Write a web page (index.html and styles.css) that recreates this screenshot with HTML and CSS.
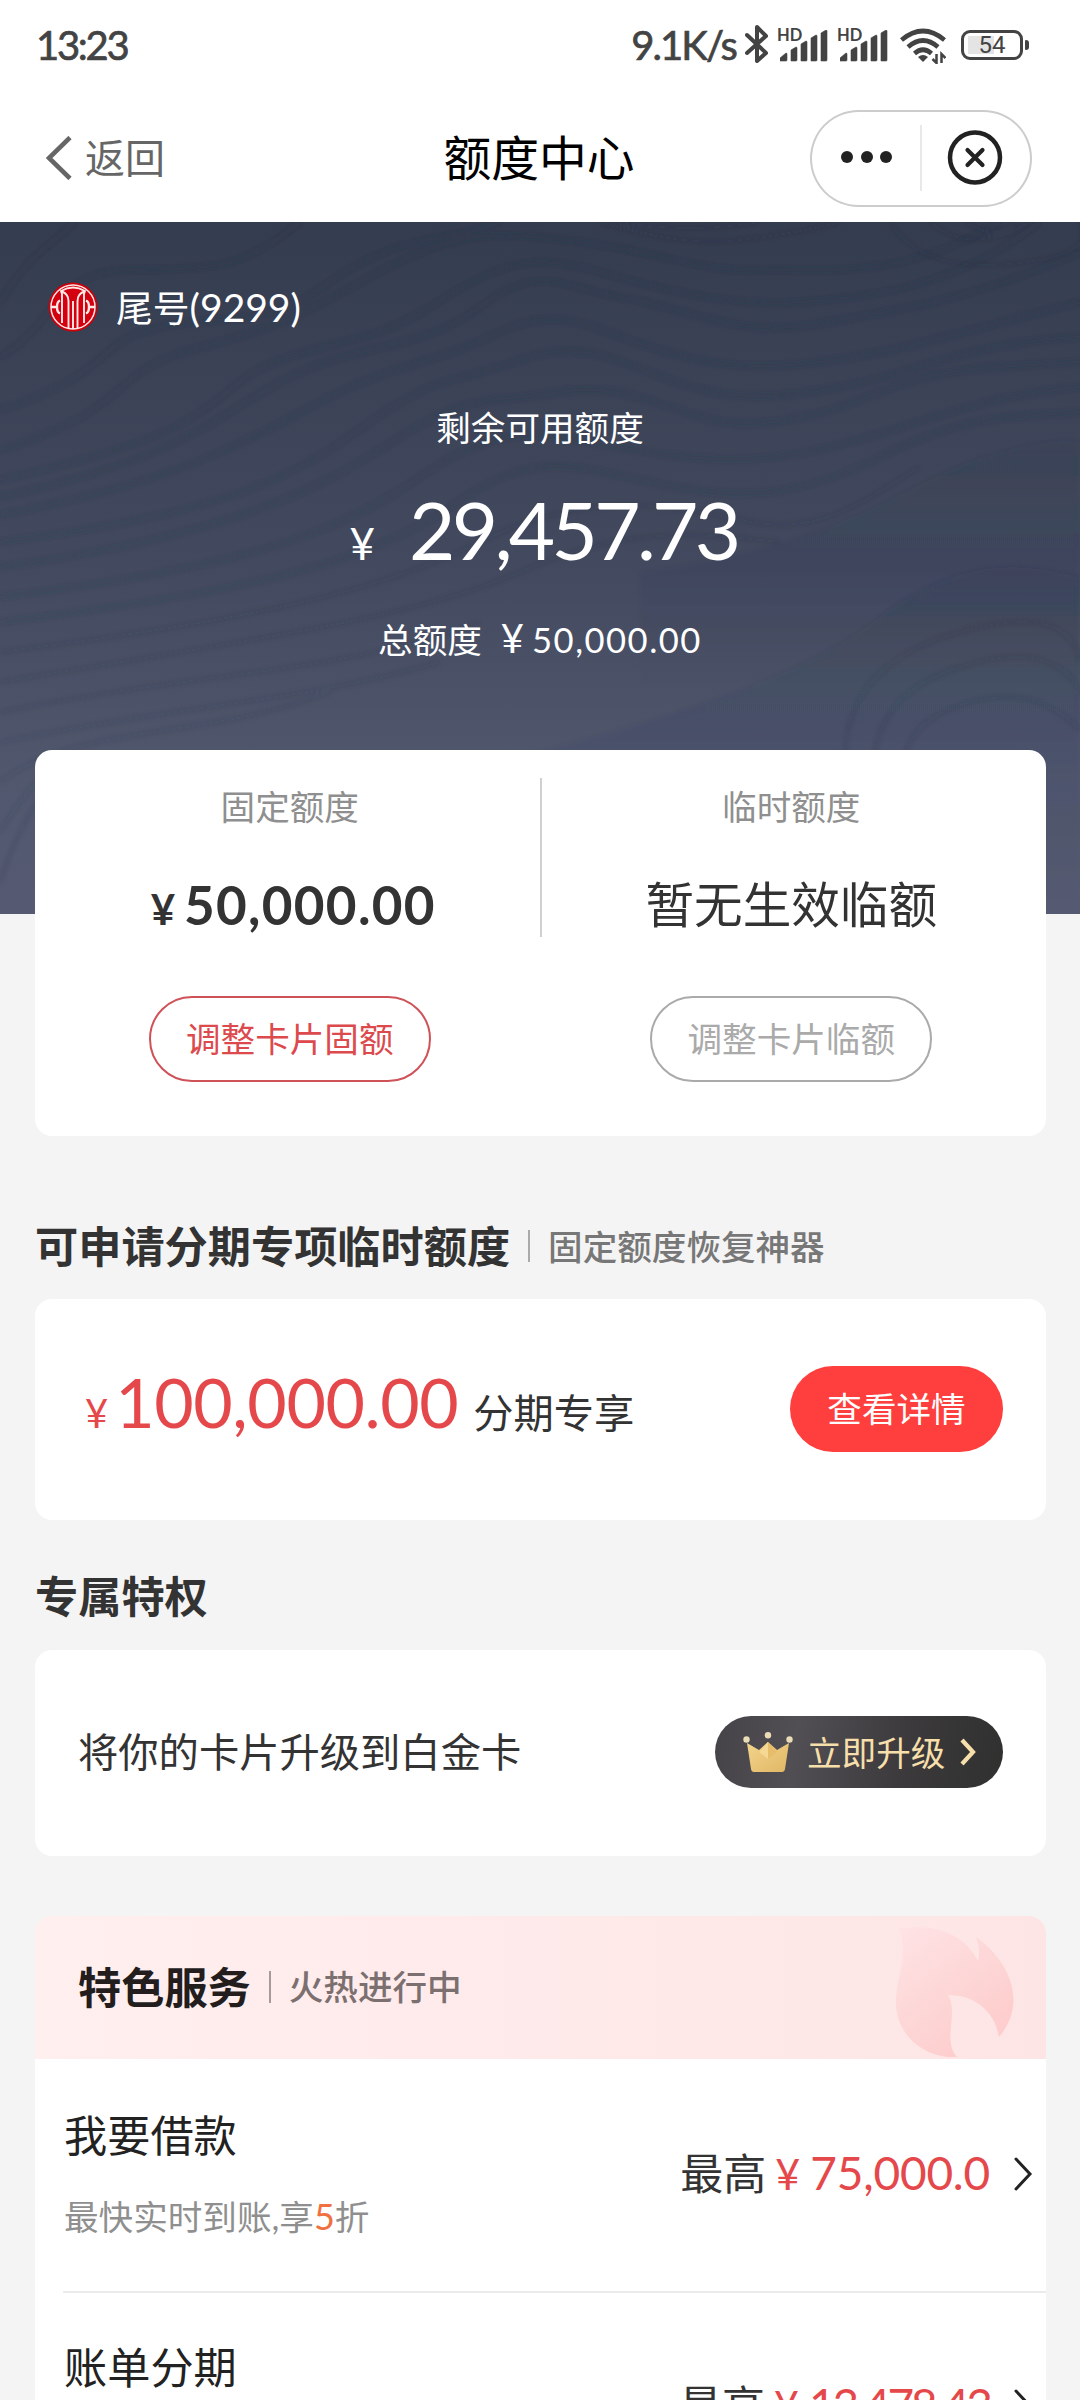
FILE: index.html
```html
<!DOCTYPE html>
<html lang="zh-CN">
<head>
<meta charset="utf-8">
<title>额度中心</title>
<link rel="stylesheet" href="styles.css">
</head>
<body>
<header class="top">
  <div class="status">
    <span class="time">13:23</span>
    <div class="status-right">
      <span class="speed">9.1K/s</span>
      <svg class="bt" viewBox="0 0 24 38" width="24" height="38"><path d="M2 10 21 28 12 36V2L21 11 2 28" fill="none" stroke="#434343" stroke-width="4" stroke-linejoin="round" stroke-linecap="round"/></svg>
      <span class="signal"><b class="hd">HD</b><svg viewBox="0 0 48 32" width="48" height="32"><path id="bars" d="M0 31v-3l6-5q1 0 1 1v6q0 1-1 1zM11 31V20l5-3q1 0 1 1v12q0 1-1 1zM21 31V14l5-3q1 0 1 1v18q0 1-1 1zM31 31V8l5-3q1 0 1 1v24q0 1-1 1zM41 31V3l5-3q1 0 1 1v29q0 1-1 1z" fill="#434343" stroke="#434343" stroke-width=".6"/></svg></span>
      <span class="signal"><b class="hd">HD</b><svg viewBox="0 0 48 32" width="48" height="32"><use href="#bars"/></svg></span>
      <svg class="wifi" viewBox="0 0 46 36" width="46" height="36"><g fill="none" stroke="#434343" stroke-width="4.600"><path d="M1.500 12Q23-6 44.500 12"/><path d="M8 19Q23 6 38 19"/><path d="M14.500 25.500Q23 18 31.500 25.500"/></g><path d="M18 29Q23 25 28 29L23 34z" fill="#434343"/><path d="M36.500 26v9l-4-4M41.500 35v-9l4 4" fill="none" stroke="#434343" stroke-width="2.500"/></svg>
      <span class="battery"><span>54</span></span>
    </div>
  </div>
  <div class="nav">
    <div class="back"><svg viewBox="0 0 26 44" width="26" height="44"><path d="M24 1.500 3 22 24 42.500" fill="none" stroke="#666" stroke-width="4.600"/></svg><span>返回</span></div>
    <h1>额度中心</h1>
    <div class="capsule">
      <svg viewBox="0 0 222 96" width="222" height="96"><g fill="#222"><circle cx="37" cy="47" r="6"/><circle cx="57" cy="47" r="6"/><circle cx="76" cy="47" r="6"/></g><path d="M111 15v66" stroke="#e8e8e8" stroke-width="2"/><circle cx="165" cy="47.500" r="25" fill="none" stroke="#222" stroke-width="4.500"/><path d="m157.500 40 15 15m0-15-15 15" stroke="#222" stroke-width="4.200" stroke-linecap="round"/></svg>
    </div>
  </div>
</header>

<section class="hero">
  <svg class="waves" viewBox="0 0 1080 692" width="1080" height="692">
    <defs><filter id="soft"><feGaussianBlur stdDeviation="2.400"/></filter>
    <linearGradient id="shade" x1="0" y1="0" x2="0" y2="1"><stop offset="0" stop-color="#262d40" stop-opacity=".13"/><stop offset="1" stop-color="#262d40" stop-opacity="0"/></linearGradient></defs>
    <g fill="none" stroke="#272e43" stroke-opacity=".24" stroke-width="4" filter="url(#soft)">
      <path d="M0 80C30 30 50 25 75 0"/>
      <path d="M0 135C60 100 50 50 130 48S240 50 300 0"/>
      <path d="M0 188C120 150 90 120 160 105S260 110 330 60S450 20 500 0"/>
      <path d="M0 228C130 190 110 150 190 128S280 105 370 55S500 10 580 20S700 50 760 48S900 60 1000 0"/>
      <path d="M0 258C170 220 190 200 240 160S360 130 430 85S530 30 600 50S740 85 800 80S950 70 1040 0"/>
      <path d="M0 275C190 235 220 190 290 155S420 130 480 85S560 65 620 75S740 115 810 103S970 80 1080 30"/>
      <path d="M0 293C200 255 260 210 330 175S440 140 500 110S600 110 650 125S740 150 820 140S960 110 1080 80"/>
      <path d="M0 320C240 290 300 250 370 200S460 160 520 138S620 140 670 158S760 180 840 165S970 120 1080 115"/>
      <path d="M0 345C250 310 330 260 400 215S500 180 560 170S660 185 710 197S820 195 880 170S990 145 1080 140"/>
      <path d="M0 375C250 344 340 310 420 255S540 210 620 225S760 245 850 220S980 175 1080 165"/>
      <path d="M0 400C250 370 370 340 450 285S560 240 650 260S800 275 880 235S1000 195 1080 190"/>
    </g>
    <g fill="none" stroke="#272e43" stroke-opacity=".11" stroke-width="4" filter="url(#soft)">
      <path d="M0 430C240 400 380 370 480 320S660 280 740 298S860 280 920 245"/>
      <path d="M0 460C240 420 420 395 520 350S690 310 780 320"/>
      <path d="M0 490C200 450 350 450 480 400"/>
      <path d="M0 520C200 480 300 480 440 440"/>
      <path d="M0 560C80 500 200 520 330 470"/>
      <path d="M0 610Q30 560 60 540M0 660Q20 600 45 570M845 530Q850 440 960 410T1080 440M875 530Q885 465 970 442T1080 470M905 530Q920 490 980 478T1080 508"/>
      <path d="M600 0Q680 25 740 18T840 0M620 0Q690 12 760 0M890 0Q920 50 1010 42T1080 0M930 0Q970 35 1030 0M965 0Q1000 20 1015 0"/>
    </g>
    <path d="M640 350C850 320 900 265 970 240Q1040 215 1080 220V470H640Z" fill="url(#shade)" filter="url(#soft)"/>
    <path d="M420 560C700 490 800 455 880 395S1020 340 1080 355V692H420Z" fill="url(#shade)" filter="url(#soft)"/>
  </svg>
  <div class="account">
    <svg viewBox="0 0 50 50" width="50" height="50"><circle cx="25" cy="25" r="24.500" fill="#c7000b"/><circle cx="25" cy="25" r="22" fill="#d4000f" stroke="#ffe3e3" stroke-width="1.500"/><g fill="none" stroke="#ffe9e6" stroke-width="1.900"><path d="M14 41V12L13 9Q25 2 37 9L36 12V41M14 9.500Q20.500 12 20.500 19V46M36 9.500Q29.500 12 29.500 19V46M25 19V47"/></g><path d="M12 18.500C8 20 8 30 12 31.500M38 18.500C42 20 42 30 38 31.500" fill="none" stroke="#ffe9e6" stroke-width="2.400"/><path d="M3 25h6M41 25h6" stroke="#ffe9e6" stroke-width="2.400"/></svg>
    <span class="tail">尾号<span class="num">(9299)</span></span>
  </div>
  <div class="hero-label">剩余可用额度</div>
  <div class="balance"><span class="cur">¥</span><span class="num">29,457.73</span></div>
  <div class="total"><span>总额度</span><span class="cur">¥</span><span class="num">50,000.00</span></div>
</section>

<main>
  <section class="card limits">
    <div class="col fixed">
      <div class="label">固定额度</div>
      <div class="value money"><span class="cur">¥</span><span class="num">50,000.00</span></div>
      <button class="outline">调整卡片固额</button>
    </div>
    <i class="split"></i>
    <div class="col temp">
      <div class="label">临时额度</div>
      <div class="value">暂无生效临额</div>
      <button class="outline">调整卡片临额</button>
    </div>
  </section>

  <h2 class="heading first">可申请分期专项临时额度<i></i><small>固定额度恢复神器</small></h2>
  <section class="card special">
    <div class="offer"><span class="cur">¥</span><span class="num">100,000.00</span><span class="txt">分期专享</span></div>
    <button class="detail">查看详情</button>
  </section>

  <h2 class="heading second">专属特权</h2>
  <section class="card privilege">
    <span>将你的卡片升级到白金卡</span>
    <button class="upgrade">
      <svg viewBox="0 0 50 40" width="50" height="40"><defs><linearGradient id="gold" x1="0" y1="0" x2="1" y2="1"><stop offset="0" stop-color="#f3d48e"/><stop offset="1" stop-color="#e0b764"/></linearGradient></defs><path d="M4 11 16 18 25 10 34 18 46 11 42 37Q41.500 40 39 40H11Q8.500 40 8 37Z" fill="url(#gold)"/><path d="M25 10 34 20 25 27 16 20Z" fill="#e7bd6b"/><path d="M25 10V27L16 20Z" fill="#f4d894"/><g fill="#eadcb5"><circle cx="3.500" cy="7.500" r="3.200"/><circle cx="25" cy="3.300" r="3.200"/><circle cx="46.500" cy="7.500" r="3.200"/></g></svg>
      <span>立即升级</span>
      <svg viewBox="0 0 18 28" width="18" height="28"><path d="M3 2 14 14 3 26" fill="none" stroke="#f6dfaa" stroke-width="4.200"/></svg>
    </button>
  </section>

  <section class="services">
    <div class="services-head">
      <h2 class="heading">特色服务<i></i><small>火热进行中</small></h2>
      <svg viewBox="0 0 118 131" width="118" height="131"><defs><linearGradient id="flame" x1=".1" y1="0" x2=".8" y2="1"><stop offset="0" stop-color="#ffe2e4"/><stop offset=".55" stop-color="#fdd5d5"/><stop offset="1" stop-color="#ffcaca"/></linearGradient></defs><path d="M3 2C35-4 67 5 82 34C84 26 83 18 80 10C110 31 134 73 103 110C99 87 82 68 52 68C63 87 46 113 61 130C24 132-2 103 0 72C1 48 13 26 3 2Z" fill="url(#flame)"/></svg>
    </div>
    <div class="row">
      <div class="info"><div class="name">我要借款</div><div class="desc">最快实时到账,享<em>5</em>折</div></div>
      <div class="quota"><span>最高</span><span class="cur">¥</span><span class="num">75,000.0</span></div>
      <svg class="go" viewBox="0 0 20 36" width="20" height="36"><path d="M3 3 17 18 3 33" fill="none" stroke="#222" stroke-width="3" stroke-linecap="round"/></svg>
    </div>
    <div class="row">
      <div class="info"><div class="name">账单分期</div></div>
      <div class="quota tight"><span>最高</span><span class="cur">¥</span><span class="num">13,478.43</span></div>
      <svg class="go" viewBox="0 0 20 36" width="20" height="36"><path d="M3 3 17 18 3 33" fill="none" stroke="#222" stroke-width="3" stroke-linecap="round"/></svg>
    </div>
  </section>
</main>
</body>
</html>
```
FILE: styles.css
```css
* { box-sizing: border-box; }
body {
  margin: 0;
  width: 1080px;
  height: 2400px;
  overflow: hidden;
  background: #f4f4f4;
  color: #333;
  font-family: Lato, "Noto Sans CJK SC", sans-serif;
  font-size: 34.6px;
  line-height: 40px;
  white-space: nowrap;
}
h1, h2 { margin: 0; }
svg { display: block; flex: none; }
button { font: inherit; padding: 0; border: 0; }

/* header */
.top { height: 222px; background: #fff; }
.status {
  display: flex;
  justify-content: space-between;
  height: 96px;
  padding: 25px 50px 0 36px;
  color: #434343;
  font-size: 40px;
  -webkit-text-stroke: .7px #434343;
}
.time { letter-spacing: -2.3px; }
.status-right { display: flex; align-items: flex-start; padding-top: 1px; }
.speed { letter-spacing: -1.9px; margin: -1px 9px 0 0; }
.bt { margin: -1px 11px 0 0; }
.signal { position: relative; width: 48px; height: 36px; padding-top: 4px; margin-right: 12px; }
.hd {
  position: absolute;
  left: -3px;
  top: 1px;
  font: 700 16.5px/16px Lato, sans-serif;
  -webkit-text-stroke: 0;
}
.wifi { margin: 2px 15px 0 0; }
.battery {
  position: relative;
  width: 62px;
  height: 30px;
  margin: 4px 7px 0 0;
  border: 3px solid #434343;
  border-radius: 9px;
  background: linear-gradient(#e4e4e4, #e4e4e4) 4px 3px / 26px 18px no-repeat;
  font: 400 24px/25px Roboto, sans-serif;
  text-align: center;
  -webkit-text-stroke: 0;
}
.battery::after {
  content: "";
  position: absolute;
  right: -9px;
  top: 7px;
  width: 4px;
  height: 10px;
  border-radius: 1px 3px 3px 1px;
  background: #434343;
}
.nav {
  display: grid;
  grid-template-columns: 1fr auto 1fr;
  align-items: center;
  height: 126px;
  padding: 0 48px 0 46px;
}
.nav > * { margin-bottom: 2px; }
.back { display: flex; align-items: center; gap: 13px; color: #666; font-size: 40px; }
.nav h1 { font-size: 47.8px; font-weight: 400; color: #000; line-height: 56px; }
.capsule {
  justify-self: end;
  width: 222px;
  height: 97px;
  border-radius: 49px;
  box-shadow: inset 0 0 0 2px #ccc;
  margin-bottom: 1px;
}

/* hero */
.hero {
  position: relative;
  height: 692px;
  padding-top: 60px;
  background: linear-gradient(#343c4f, #434a5f 50%, #51586e 80%, #555a72);
  color: #fff;
}
.waves { position: absolute; inset: 0; }
.account, .hero-label, .balance, .total { position: relative; }
.account { display: flex; align-items: center; gap: 18px; height: 50px; padding-left: 48px; }
.tail { font-size: 36.8px; }
.tail .num { font-size: 39px; }
.hero-label { margin-top: 76px; text-align: center; }
.balance {
  display: flex;
  justify-content: center;
  align-items: baseline;
  height: 80px;
  margin-top: 41px;
  font-size: 80px;
  line-height: 80px;
  gap: 34px;
  padding-left: 7px;
}
.balance .num { letter-spacing: -3.7px; }
.balance .cur { font-size: 44px; }
.total { display: flex; justify-content: center; align-items: baseline; height: 40px; margin-top: 49px; }
.total .cur { font-size: 40px; margin: 0 8px 0 19px; }
.total .num { letter-spacing: 1.5px; }

/* cards */
main { position: relative; margin: -164px 34px 0 35px; }
.card { background: #fff; border-radius: 17px; }
.limits { display: flex; height: 386px; }
.col { flex: 1; text-align: center; padding-top: 37px; }
.col.fixed { padding-left: 5px; }
.col.temp { padding-right: 5px; }
.split { width: 2px; height: 159px; margin-top: 28px; background: #d0d0d0; }
.label { color: #8f8f8f; }
.value { margin: 47px 0 62px; height: 60px; line-height: 60px; font-size: 48.6px; }
.money { display: flex; justify-content: center; align-items: baseline; font-weight: 700; font-size: 53px; padding: 1px 0 0 7px; }
.money .num { letter-spacing: 1.3px; }
.money .cur { font-size: 42px; margin-right: 9px; }
.outline {
  width: 282px;
  height: 86px;
  border: 2px solid #aaa;
  border-radius: 43px;
  background: #fff;
  color: #aaa;
}
.fixed .outline { color: #dc4a4e; border-color: #cf5258; }

.heading {
  display: flex;
  align-items: center;
  height: 50px;
  font-size: 43.2px;
  font-weight: 700;
  line-height: 48px;
  padding-bottom: 2px;
}
.heading i { width: 2px; height: 32px; margin: 0 18px; background: #aaa; }
.heading small { font-size: 34.6px; font-weight: 500; color: #777; padding-top: 1px; }
.heading.first { margin: 86px 0 27px; }
.heading.second { margin: 52px 0 28px; }

.special { display: flex; justify-content: space-between; height: 221px; padding: 67px 43px 0 50px; }
.offer { display: flex; align-items: baseline; height: 80px; margin-top: -4px; font-size: 68px; line-height: 80px; color: #e5484b; }
.offer .num { letter-spacing: -.4px; }
.offer .cur { font-size: 40px; margin-right: 7px; }
.offer .txt { font-size: 40.3px; color: #333; margin-left: 15px; }
.detail { width: 213px; height: 86px; border-radius: 43px; background: #ff3e3e; color: #fff; }

.privilege { display: flex; justify-content: space-between; height: 206px; padding: 66px 43px 0 43px; font-size: 40.3px; line-height: 71px; }
.upgrade {
  display: flex;
  align-items: center;
  width: 288px;
  height: 72px;
  padding-left: 28px;
  border-radius: 36px;
  background: linear-gradient(100deg, #454348, #514f54 28%, #3c3a3c 65%, #30302f);
  color: #f6dfaa;
  font-size: 34.6px;
}
.upgrade span { margin: 0 14px 0 14px; }

/* featured services */
.services { height: 484px; margin-top: 60px; background: #fff; border-radius: 17px 17px 0 0; overflow: hidden; }
.services-head {
  display: flex;
  justify-content: space-between;
  align-items: center;
  height: 143px;
  padding: 0 32px 0 43px;
  background: linear-gradient(90deg, #ffefee, #ffebec 35%, #fee9e8 65%, #fde5e5);
}
.services-head svg { margin-top: 10px; }
.services-head .heading { color: #231d1e; }
.services-head .heading small { color: #7b6f70; }
.services-head .heading i { background: #a69a9b; }
.row { position: relative; display: flex; height: 233px; padding: 50px 13px 0 29px; }
.row + .row::before { content: ""; position: absolute; left: 28px; right: 0; top: 0; height: 2px; background: #ebebeb; }
.row + .row { margin-top: -1px; height: 110px; }
.info { flex: 1; }
.name { font-size: 43.2px; line-height: 52px; color: #222; }
.desc { margin-top: 35px; color: #8f8f8f; }
.desc em { font-style: normal; color: #f0703f; font-size: 36px; }
.quota { display: flex; align-items: baseline; margin-top: 36px; height: 56px; font-size: 43px; line-height: 56px; color: #e5484b; }
.quota span:first-child { color: #333; }
.quota .cur { margin: 0 10px 0 9px; }
.quota .num { font-size: 46px; letter-spacing: -.2px; }
.quota.tight .num { letter-spacing: -3px; }
.go { margin: 47px 0 0 23px; }
```
